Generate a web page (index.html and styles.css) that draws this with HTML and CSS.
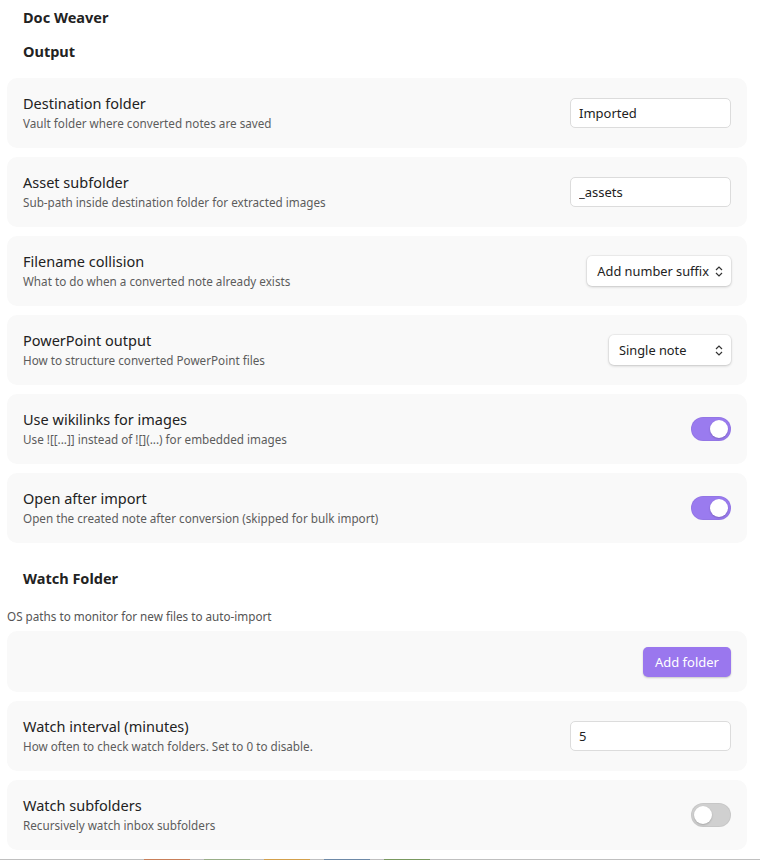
FILE: index.html
```html
<!DOCTYPE html>
<html lang="en">
<head>
    <meta charset="UTF-8">
    <meta name="viewport" content="width=device-width, initial-scale=1.0">
    <title>Doc Weaver</title>
    <link rel="stylesheet" href="styles.css">
</head>
<body>
    <div class="settings">
        <h2 class="plugin-title">Doc Weaver</h2>
        <h3 class="section-title">Output</h3>

        <div class="setting-item">
            <div class="setting-info">
                <div class="setting-name">Destination folder</div>
                <div class="setting-desc">Vault folder where converted notes are saved</div>
            </div>
            <input class="text-input" type="text" value="Imported">
        </div>

        <div class="setting-item">
            <div class="setting-info">
                <div class="setting-name">Asset subfolder</div>
                <div class="setting-desc">Sub-path inside destination folder for extracted images</div>
            </div>
            <input class="text-input" type="text" value="_assets">
        </div>

        <div class="setting-item">
            <div class="setting-info">
                <div class="setting-name">Filename collision</div>
                <div class="setting-desc">What to do when a converted note already exists</div>
            </div>
            <div class="dropdown">
                <span>Add number suffix</span>
                <svg class="chevrons" width="8" height="11" viewBox="0 0 8 11"><path d="M1 4 L4 1 L7 4 M1 7 L4 10 L7 7" fill="none" stroke="#333" stroke-width="1.2"/></svg>
            </div>
        </div>

        <div class="setting-item">
            <div class="setting-info">
                <div class="setting-name">PowerPoint output</div>
                <div class="setting-desc">How to structure converted PowerPoint files</div>
            </div>
            <div class="dropdown dropdown-wide">
                <span>Single note</span>
                <svg class="chevrons" width="8" height="11" viewBox="0 0 8 11"><path d="M1 4 L4 1 L7 4 M1 7 L4 10 L7 7" fill="none" stroke="#333" stroke-width="1.2"/></svg>
            </div>
        </div>

        <div class="setting-item">
            <div class="setting-info">
                <div class="setting-name">Use wikilinks for images</div>
                <div class="setting-desc">Use ![[...]] instead of ![](...) for embedded images</div>
            </div>
            <div class="toggle is-on"><div class="knob"></div></div>
        </div>

        <div class="setting-item">
            <div class="setting-info">
                <div class="setting-name">Open after import</div>
                <div class="setting-desc">Open the created note after conversion (skipped for bulk import)</div>
            </div>
            <div class="toggle is-on"><div class="knob"></div></div>
        </div>

        <h3 class="section-title watch-title">Watch Folder</h3>
        <p class="section-desc">OS paths to monitor for new files to auto-import</p>

        <div class="setting-item setting-button">
            <button class="mod-cta">Add folder</button>
        </div>

        <div class="setting-item">
            <div class="setting-info">
                <div class="setting-name">Watch interval (minutes)</div>
                <div class="setting-desc">How often to check watch folders. Set to 0 to disable.</div>
            </div>
            <input class="text-input" type="text" value="5">
        </div>

        <div class="setting-item">
            <div class="setting-info">
                <div class="setting-name">Watch subfolders</div>
                <div class="setting-desc">Recursively watch inbox subfolders</div>
            </div>
            <div class="toggle"><div class="knob"></div></div>
        </div>
    </div>

    <div class="taskbar">
        <span class="tab tab-orange"></span>
        <span class="tab tab-green"></span>
        <span class="tab tab-yellow"></span>
        <span class="tab tab-blue"></span>
        <span class="tab tab-green2"></span>
    </div>
</body>
</html>
```

FILE: styles.css
```css
body {
    font-family: "Noto Sans", "Open Sans", sans-serif;
    margin: 0;
    padding: 0;
    background-color: #ffffff;
    color: #222;
}

.settings {
    padding: 0 13px 0 7px;
}

.plugin-title {
    font-size: 14.5px;
    font-weight: bold;
    margin: 0;
    padding: 7px 16px 0 16px;
    line-height: 20px;
}

.section-title {
    font-size: 14.5px;
    font-weight: bold;
    margin: 0;
    padding: 14px 16px 17px 16px;
    line-height: 20px;
}

.watch-title {
    padding-top: 16px;
    padding-bottom: 20px;
}

.section-desc {
    margin: 0 0 7px 0;
    font-size: 11.7px;
    color: #555;
    line-height: 16px;
}

.setting-item {
    display: flex;
    align-items: center;
    justify-content: space-between;
    height: 70px;
    box-sizing: border-box;
    padding: 0 16px;
    margin-bottom: 9px;
    background: #f9f9f9;
    border-radius: 10px;
}

.setting-info {
    margin-top: -1px;
}

.setting-button {
    height: 61px;
    justify-content: flex-end;
}

.setting-name {
    font-size: 14.5px;
    line-height: 20px;
    color: #222;
}

.setting-desc {
    font-size: 11.7px;
    line-height: 17px;
    color: #5c5c5c;
    margin-top: 2px;
}

.text-input {
    width: 161px;
    height: 30px;
    box-sizing: border-box;
    border: 1px solid #dcdcdc;
    border-radius: 5px;
    padding: 0 8px;
    font-family: inherit;
    font-size: 13px;
    color: #222;
    background: white;
}

.dropdown {
    display: flex;
    align-items: center;
    justify-content: space-between;
    gap: 6px;
    height: 30px;
    box-sizing: border-box;
    padding: 0 8px 0 10px;
    border-radius: 5px;
    background: white;
    font-size: 12.8px;
    box-shadow: 0 1px 3px rgba(0,0,0,0.18), 0 0 0 1px rgba(0,0,0,0.04);
}

.dropdown-wide {
    width: 122px;
}

.toggle {
    width: 40px;
    height: 24px;
    border-radius: 12px;
    background: #d0d0d0;
    position: relative;
    box-shadow: inset 0 0 0 1px rgba(0,0,0,0.04);
}

.toggle .knob {
    position: absolute;
    top: 3px;
    left: 3px;
    width: 18px;
    height: 18px;
    border-radius: 50%;
    background: white;
    box-shadow: 0 1px 2px rgba(0,0,0,0.2);
}

.toggle.is-on {
    background: #9a7bef;
}

.toggle.is-on .knob {
    left: 19px;
}

button.mod-cta {
    background: #9a77ee;
    color: white;
    border: none;
    height: 30px;
    padding: 0 12px;
    border-radius: 5px;
    font-family: inherit;
    font-size: 13px;
    box-shadow: 0 1px 2px rgba(0,0,0,0.2);
    cursor: pointer;
}

.taskbar {
    height: 3px;
    background: #c0c0c0;
    display: flex;
    gap: 14px;
    padding-left: 144px;
}

.tab {
    width: 46px;
    height: 3px;
}

.tab-orange { background: #c9805a; }
.tab-green { background: #9aaf88; }
.tab-yellow { background: #d4a14c; }
.tab-blue { background: #6e8aa8; }
.tab-green2 { background: #7a9a60; }
```
